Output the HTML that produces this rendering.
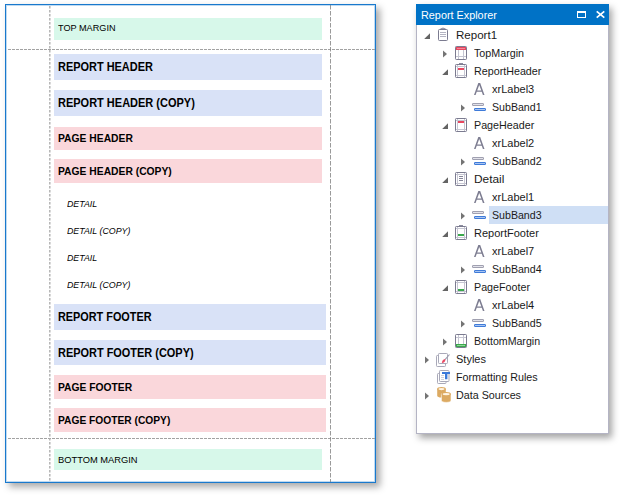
<!DOCTYPE html>
<html><head><meta charset="utf-8"><title>Report Explorer</title>
<style>
*{margin:0;padding:0;box-sizing:border-box}
html,body{width:620px;height:495px;background:#fff;overflow:hidden}
body{position:relative;font-family:"Liberation Sans",sans-serif;color:#000}
.abs{position:absolute}
#page{position:absolute;left:5px;top:4px;width:371px;height:479px;border:1px solid #1979cd;background:#fff;box-shadow:inset 0 0 0 1px rgba(25,121,205,.28),4px 4px 7px rgba(0,0,0,.34)}
.bar{position:absolute;left:54px}
.t{position:absolute;white-space:nowrap;line-height:1;transform-origin:0 50%}
.m{font-size:9px;color:#000}
.b12{font-size:12px;font-weight:bold}
.b11{font-size:11px;font-weight:bold}
.d{font-size:9px;font-style:italic;color:#000}
#panel{position:absolute;left:416px;top:4px;width:193px;height:430px;background:#fff;border:1px solid #b4b4c4;border-top:none;box-shadow:3px 4px 7px rgba(0,0,0,.36)}
#hdr{position:absolute;left:416px;top:4px;width:193px;height:21px;background:#0072c6}
#hdr .t{color:#fff;font-size:11px}
.row{position:absolute;font-size:11px;white-space:nowrap;line-height:1;color:#1a1a1a;transform-origin:0 50%}
svg{position:absolute;overflow:visible}
.c{shape-rendering:crispEdges}
</style></head><body>
<div id="page"></div>

<div class="bar" style="top:18px;height:22px;width:268px;background:#d7f8ea"></div>
<div class="t m" style="left:58px;top:24.0px;transform:scaleX(1.015)">TOP MARGIN</div>
<div class="bar" style="top:54px;height:26px;width:268px;background:#d9e2f7"></div>
<div class="t b12" style="left:57.5px;top:61.0px;transform:scaleX(0.912)">REPORT HEADER</div>
<div class="bar" style="top:90px;height:26px;width:268px;background:#d9e2f7"></div>
<div class="t b12" style="left:57.5px;top:97.0px;transform:scaleX(0.916)">REPORT HEADER (COPY)</div>
<div class="bar" style="top:127px;height:23px;width:268px;background:#fad7db"></div>
<div class="t b11" style="left:57.5px;top:133.0px;transform:scaleX(0.937)">PAGE HEADER</div>
<div class="bar" style="top:159px;height:24px;width:268px;background:#fad7db"></div>
<div class="t b11" style="left:57.5px;top:165.5px;transform:scaleX(0.937)">PAGE HEADER (COPY)</div>
<div class="bar" style="top:304px;height:26px;width:272px;background:#d9e2f7"></div>
<div class="t b12" style="left:57.5px;top:311.0px;transform:scaleX(0.905)">REPORT FOOTER</div>
<div class="bar" style="top:340px;height:25px;width:272px;background:#d9e2f7"></div>
<div class="t b12" style="left:57.5px;top:346.5px;transform:scaleX(0.912)">REPORT FOOTER (COPY)</div>
<div class="bar" style="top:375px;height:24px;width:272px;background:#fad7db"></div>
<div class="t b11" style="left:57.5px;top:381.5px;transform:scaleX(0.935)">PAGE FOOTER</div>
<div class="bar" style="top:408px;height:24px;width:272px;background:#fad7db"></div>
<div class="t b11" style="left:57.5px;top:414.5px;transform:scaleX(0.93)">PAGE FOOTER (COPY)</div>
<div class="bar" style="top:449px;height:21px;width:268px;background:#d7f8ea"></div>
<div class="t m" style="left:58px;top:455.5px;transform:scaleX(1.035)">BOTTOM MARGIN</div>
<div class="t d" style="left:67px;top:199.5px;transform:scaleX(0.98)">DETAIL</div>
<div class="t d" style="left:67px;top:226.5px;transform:scaleX(0.98)">DETAIL (COPY)</div>
<div class="t d" style="left:67px;top:253.5px;transform:scaleX(0.98)">DETAIL</div>
<div class="t d" style="left:67px;top:280.5px;transform:scaleX(0.98)">DETAIL (COPY)</div>
<svg style="left:0;top:0" width="620" height="495" viewBox="0 0 620 495"><g class="c" fill="none" stroke-width="1"><path d="M8 49.5H375M8 438.5H375" stroke="#a2a2a2" stroke-dasharray="3 1"/></g><path d="M49.800 6V482" stroke="#b0b0b0" stroke-width="1.400" stroke-dasharray="2.500 1.500" fill="none"/><path d="M330.500 5V482" stroke="#808080" stroke-width="0.800" stroke-dasharray="4.500 1.500" fill="none"/></svg>
<div id="panel"></div><div id="hdr"><div class="t" style="left:4.8px;top:6px;transform:scaleX(.985)">Report Explorer</div></div>
<svg style="left:576px;top:10px" width="30" height="10" viewBox="0 0 30 10"><path class="c" d="M1 1h9v7h-9zM2 3v4h7v-4z" fill="#fff" fill-rule="evenodd"/><path d="M20.700 1.300 L28.300 7.700 M28.300 1.300 L20.700 7.700" stroke="#fff" stroke-width="1.700" fill="none"/></svg>
<div class="abs" style="left:489px;top:206px;width:119px;height:18px;background:#cfdff5"></div>
<svg style="left:423px;top:32px" width="8" height="8" viewBox="0 0 8 8"><path d="M7 1.200V7H1.200Z" fill="#646464"/></svg>
<svg style="left:438px;top:27px" width="11" height="15" viewBox="0 0 11 15"><path d="M2.500 2.500V1.500Q2.500 1 3 1H4.200L5 0.300L5.800 1H7Q7.500 1 7.500 1.500V2.500Z" fill="#9a9aac"/><rect x="0.5" y="2.500" width="9" height="11" rx="0.900" fill="#fff" stroke="#7b7b90"/><g class="c" fill="#b4b4c2"><rect x="2" y="5" width="6" height="1"/><rect x="2" y="7" width="6" height="1"/><rect x="2" y="9" width="6" height="1"/></g></svg>
<div class="row" style="left:456px;top:30px;transform:scaleX(1.05)">Report1</div>
<svg style="left:441px;top:50px" width="8" height="9" viewBox="0 0 8 9"><path d="M2 0.500L6 4L2 7.500Z" fill="#747474"/></svg>
<svg style="left:455px;top:46px" width="12" height="14" viewBox="0 0 12 14"><rect x="0.5" y="0.5" width="11" height="13" rx="0.8" fill="#fff" stroke="#7b7b90"/><g class="c"><rect x="1" y="1" width="10" height="3" fill="#e8475f"/><rect x="2" y="2" width="8" height="1" fill="#f48a9a"/><g fill="#c6c6d2"><rect x="1" y="10" width="10" height="1"/><rect x="3" y="4" width="1" height="9"/><rect x="8" y="4" width="1" height="9"/></g></g></svg>
<div class="row" style="left:474px;top:48px;transform:scaleX(0.975)">TopMargin</div>
<svg style="left:441px;top:68px" width="8" height="8" viewBox="0 0 8 8"><path d="M7 1.200V7H1.200Z" fill="#646464"/></svg>
<svg style="left:455px;top:63px" width="12" height="15" viewBox="0 0 12 15"><rect class="c" x="4" y="0" width="4" height="1" fill="#8c8c9e"/><rect x="0.5" y="1.5" width="11" height="13" rx="0.8" fill="#fff" stroke="#7b7b90"/><g class="c" fill="#c6c6d2"><rect x="2" y="2" width="1" height="12"/><rect x="9" y="2" width="1" height="12"/><rect x="1" y="3" width="10" height="1"/><rect x="1" y="12" width="10" height="1"/></g><rect class="c" x="3" y="5" width="6" height="2" fill="#e8475f"/></svg>
<div class="row" style="left:474px;top:66px;transform:scaleX(0.975)">ReportHeader</div>
<svg style="left:474px;top:83px" width="11" height="12" viewBox="0 0 11 12"><path d="M0 12L4.300 0H6.200L10.500 12H8.900L7.750 8.800H2.750L1.600 12ZM3.200 7.500H7.300L5.250 1.900Z" fill="#7d7d91" fill-rule="evenodd"/></svg>
<div class="row" style="left:492px;top:84px;transform:scaleX(1.0)">xrLabel3</div>
<svg style="left:459px;top:104px" width="8" height="9" viewBox="0 0 8 9"><path d="M2 0.500L6 4L2 7.500Z" fill="#747474"/></svg>
<svg style="left:472px;top:103px" width="14" height="8" viewBox="0 0 14 8"><rect x="0.500" y="0.500" width="11" height="2" rx="0.300" fill="#e2e2ea" stroke="#a0a0b0"/><rect x="2.500" y="5.500" width="11" height="2" rx="0.300" fill="#a9c5f2" stroke="#3f7bd9"/></svg>
<div class="row" style="left:492px;top:102px;transform:scaleX(0.965)">SubBand1</div>
<svg style="left:441px;top:122px" width="8" height="8" viewBox="0 0 8 8"><path d="M7 1.200V7H1.200Z" fill="#646464"/></svg>
<svg style="left:455px;top:118px" width="12" height="14" viewBox="0 0 12 14"><rect x="0.5" y="0.5" width="11" height="13" rx="0.8" fill="#fff" stroke="#7b7b90"/><g class="c" fill="#c6c6d2"><rect x="2" y="1" width="1" height="12"/><rect x="9" y="1" width="1" height="12"/><rect x="1" y="2" width="10" height="1"/><rect x="1" y="11" width="10" height="1"/></g><rect class="c" x="3" y="3" width="6" height="2" fill="#e8475f"/></svg>
<div class="row" style="left:474px;top:120px;transform:scaleX(0.975)">PageHeader</div>
<svg style="left:474px;top:137px" width="11" height="12" viewBox="0 0 11 12"><path d="M0 12L4.300 0H6.200L10.500 12H8.900L7.750 8.800H2.750L1.600 12ZM3.200 7.500H7.300L5.250 1.900Z" fill="#7d7d91" fill-rule="evenodd"/></svg>
<div class="row" style="left:492px;top:138px;transform:scaleX(1.0)">xrLabel2</div>
<svg style="left:459px;top:158px" width="8" height="9" viewBox="0 0 8 9"><path d="M2 0.500L6 4L2 7.500Z" fill="#747474"/></svg>
<svg style="left:472px;top:157px" width="14" height="8" viewBox="0 0 14 8"><rect x="0.500" y="0.500" width="11" height="2" rx="0.300" fill="#e2e2ea" stroke="#a0a0b0"/><rect x="2.500" y="5.500" width="11" height="2" rx="0.300" fill="#a9c5f2" stroke="#3f7bd9"/></svg>
<div class="row" style="left:492px;top:156px;transform:scaleX(0.965)">SubBand2</div>
<svg style="left:441px;top:176px" width="8" height="8" viewBox="0 0 8 8"><path d="M7 1.200V7H1.200Z" fill="#646464"/></svg>
<svg style="left:455px;top:172px" width="12" height="14" viewBox="0 0 12 14"><rect x="0.5" y="0.5" width="11" height="13" rx="0.8" fill="#fff" stroke="#7b7b90"/><g class="c" fill="#c6c6d2"><rect x="2" y="1" width="1" height="12"/><rect x="9" y="1" width="1" height="12"/><rect x="1" y="2" width="10" height="1"/><rect x="1" y="11" width="10" height="1"/></g><g class="c" fill="#86869a"><rect x="4" y="4" width="4" height="1"/><rect x="4" y="6" width="4" height="1"/><rect x="4" y="8" width="4" height="1"/></g></svg>
<div class="row" style="left:474px;top:174px;transform:scaleX(1.08)">Detail</div>
<svg style="left:474px;top:191px" width="11" height="12" viewBox="0 0 11 12"><path d="M0 12L4.300 0H6.200L10.500 12H8.900L7.750 8.800H2.750L1.600 12ZM3.200 7.500H7.300L5.250 1.900Z" fill="#7d7d91" fill-rule="evenodd"/></svg>
<div class="row" style="left:492px;top:192px;transform:scaleX(1.0)">xrLabel1</div>
<svg style="left:459px;top:212px" width="8" height="9" viewBox="0 0 8 9"><path d="M2 0.500L6 4L2 7.500Z" fill="#747474"/></svg>
<svg style="left:472px;top:211px" width="14" height="8" viewBox="0 0 14 8"><rect x="0.500" y="0.500" width="11" height="2" rx="0.300" fill="#e2e2ea" stroke="#a0a0b0"/><rect x="2.500" y="5.500" width="11" height="2" rx="0.300" fill="#a9c5f2" stroke="#3f7bd9"/></svg>
<div class="row" style="left:492px;top:210px;transform:scaleX(0.965)">SubBand3</div>
<svg style="left:441px;top:230px" width="8" height="8" viewBox="0 0 8 8"><path d="M7 1.200V7H1.200Z" fill="#646464"/></svg>
<svg style="left:455px;top:225px" width="12" height="15" viewBox="0 0 12 15"><rect class="c" x="4" y="0" width="4" height="1" fill="#8c8c9e"/><rect x="0.5" y="1.5" width="11" height="13" rx="0.8" fill="#fff" stroke="#7b7b90"/><g class="c" fill="#c6c6d2"><rect x="2" y="2" width="1" height="12"/><rect x="9" y="2" width="1" height="12"/><rect x="1" y="3" width="10" height="1"/><rect x="1" y="12" width="10" height="1"/></g><rect class="c" x="3" y="9" width="6" height="2" fill="#3aa84c"/></svg>
<div class="row" style="left:474px;top:228px;transform:scaleX(1.0)">ReportFooter</div>
<svg style="left:474px;top:245px" width="11" height="12" viewBox="0 0 11 12"><path d="M0 12L4.300 0H6.200L10.500 12H8.900L7.750 8.800H2.750L1.600 12ZM3.200 7.500H7.300L5.250 1.900Z" fill="#7d7d91" fill-rule="evenodd"/></svg>
<div class="row" style="left:492px;top:246px;transform:scaleX(1.0)">xrLabel7</div>
<svg style="left:459px;top:266px" width="8" height="9" viewBox="0 0 8 9"><path d="M2 0.500L6 4L2 7.500Z" fill="#747474"/></svg>
<svg style="left:472px;top:265px" width="14" height="8" viewBox="0 0 14 8"><rect x="0.500" y="0.500" width="11" height="2" rx="0.300" fill="#e2e2ea" stroke="#a0a0b0"/><rect x="2.500" y="5.500" width="11" height="2" rx="0.300" fill="#a9c5f2" stroke="#3f7bd9"/></svg>
<div class="row" style="left:492px;top:264px;transform:scaleX(0.965)">SubBand4</div>
<svg style="left:441px;top:284px" width="8" height="8" viewBox="0 0 8 8"><path d="M7 1.200V7H1.200Z" fill="#646464"/></svg>
<svg style="left:455px;top:280px" width="12" height="14" viewBox="0 0 12 14"><rect x="0.5" y="0.5" width="11" height="13" rx="0.8" fill="#fff" stroke="#7b7b90"/><g class="c" fill="#c6c6d2"><rect x="2" y="1" width="1" height="12"/><rect x="9" y="1" width="1" height="12"/><rect x="1" y="2" width="10" height="1"/><rect x="1" y="11" width="10" height="1"/></g><rect class="c" x="3" y="9" width="6" height="2" fill="#3aa84c"/></svg>
<div class="row" style="left:474px;top:282px;transform:scaleX(0.975)">PageFooter</div>
<svg style="left:474px;top:299px" width="11" height="12" viewBox="0 0 11 12"><path d="M0 12L4.300 0H6.200L10.500 12H8.900L7.750 8.800H2.750L1.600 12ZM3.200 7.500H7.300L5.250 1.900Z" fill="#7d7d91" fill-rule="evenodd"/></svg>
<div class="row" style="left:492px;top:300px;transform:scaleX(1.0)">xrLabel4</div>
<svg style="left:459px;top:320px" width="8" height="9" viewBox="0 0 8 9"><path d="M2 0.500L6 4L2 7.500Z" fill="#747474"/></svg>
<svg style="left:472px;top:319px" width="14" height="8" viewBox="0 0 14 8"><rect x="0.500" y="0.500" width="11" height="2" rx="0.300" fill="#e2e2ea" stroke="#a0a0b0"/><rect x="2.500" y="5.500" width="11" height="2" rx="0.300" fill="#a9c5f2" stroke="#3f7bd9"/></svg>
<div class="row" style="left:492px;top:318px;transform:scaleX(0.965)">SubBand5</div>
<svg style="left:441px;top:338px" width="8" height="9" viewBox="0 0 8 9"><path d="M2 0.500L6 4L2 7.500Z" fill="#747474"/></svg>
<svg style="left:455px;top:334px" width="12" height="14" viewBox="0 0 12 14"><rect x="0.5" y="0.5" width="11" height="13" rx="0.8" fill="#fff" stroke="#7b7b90"/><g class="c"><rect x="1" y="10" width="10" height="3" fill="#3aa84c"/><rect x="2" y="11" width="8" height="1" fill="#8fd69a"/><g fill="#c6c6d2"><rect x="1" y="3" width="10" height="1"/><rect x="3" y="1" width="1" height="9"/><rect x="8" y="1" width="1" height="9"/></g></g></svg>
<div class="row" style="left:474px;top:336px;transform:scaleX(0.965)">BottomMargin</div>
<svg style="left:423px;top:356px" width="8" height="9" viewBox="0 0 8 9"><path d="M2 0.500L6 4L2 7.500Z" fill="#747474"/></svg>
<svg style="left:436px;top:352px" width="14" height="15" viewBox="0 0 14 15"><rect x="0.500" y="3.500" width="9" height="11" rx="0.800" fill="#fff" stroke="#a9a9b9"/><rect x="2.500" y="1.500" width="9" height="10" rx="0.800" fill="#fff" stroke="#a9a9b9"/><path d="M13.500 2.500L9 7.700" stroke="#9a9aac" stroke-width="1.100" fill="none"/><path d="M9.400 7.700Q9.300 10.300 5.800 11.100Q5.700 8.500 8.300 6.900Z" fill="#ea4a64"/></svg>
<div class="row" style="left:456px;top:354px;transform:scaleX(1.0)">Styles</div>
<svg style="left:437px;top:370px" width="14" height="14" viewBox="0 0 14 14"><rect x="0.500" y="3.500" width="8.500" height="10" rx="0.800" fill="#fff" stroke="#a9a9b9"/><rect x="2.500" y="0.500" width="9.500" height="11" rx="0.800" fill="#fff" stroke="#a9a9b9"/><g class="c" fill="#d2d2dc"><rect x="4" y="5" width="3" height="1"/><rect x="4" y="7" width="3" height="1"/><rect x="4" y="9" width="3" height="1"/></g><path d="M5 2h8v2h-2.600v5.300h-2.400v-5.300h-3z" fill="#3b79d9"/></svg>
<div class="row" style="left:456px;top:372px;transform:scaleX(0.975)">Formatting Rules</div>
<svg style="left:423px;top:392px" width="8" height="9" viewBox="0 0 8 9"><path d="M2 0.500L6 4L2 7.500Z" fill="#747474"/></svg>
<svg style="left:437px;top:387px" width="15" height="16" viewBox="0 0 15 16"><path d="M0.200 1.800V8.700C0.200 9.800 2 10.600 4.500 10.600S8.800 9.800 8.800 8.700V1.800Z" fill="#dcaa62"/><ellipse cx="4.500" cy="2" rx="4.300" ry="1.900" fill="#dcaa62"/><ellipse cx="4.500" cy="2.100" rx="3.100" ry="1.100" fill="#fff4e2"/><path d="M4.400 6.800V13.400C4.400 14.600 6.500 15.400 9.200 15.400S14 14.600 14 13.400V6.800Z" fill="#dcaa62" stroke="#fff" stroke-width="0.600"/><ellipse cx="9.200" cy="7" rx="4.700" ry="2" fill="#dcaa62"/><ellipse cx="9.200" cy="7.100" rx="3.500" ry="1.200" fill="#fff4e2"/></svg>
<div class="row" style="left:456px;top:390px;transform:scaleX(0.975)">Data Sources</div>
</body></html>
